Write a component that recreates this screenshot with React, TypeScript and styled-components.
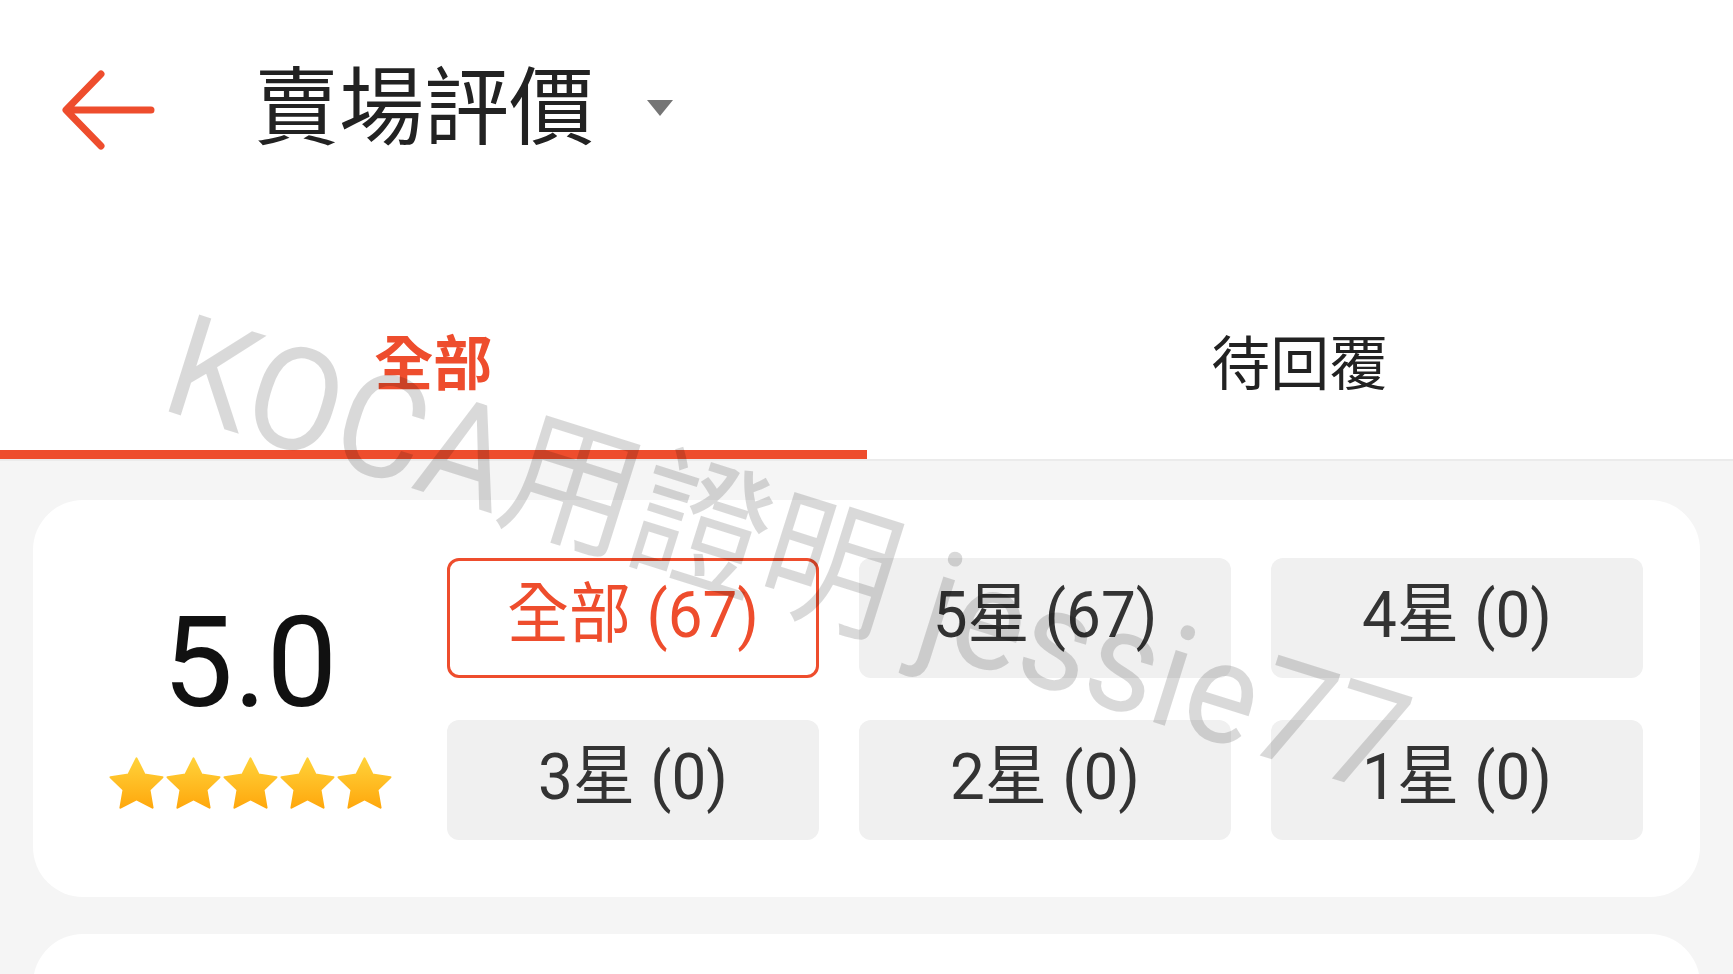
import React from "react";
import styled, { createGlobalStyle } from "styled-components";

const Global = createGlobalStyle`
  html, body { margin: 0; padding: 0; background: #fff; }
  body { font-family: Roboto, "Noto Sans CJK TC", sans-serif; }
  * { box-sizing: border-box; }
`;

const ORANGE = "#ee4d2d";

const Page = styled.div`
  position: relative;
  width: 100%;
  height: 974px;
  overflow: hidden;
  background: #f5f5f5;
`;

const Header = styled.header`
  height: 212px;
  background: #fff;
  display: flex;
  align-items: center;
  padding-left: 61px;
`;

const BackButton = styled.div`
  width: 94px;
  height: 84px;
  margin-top: 8px;
  display: flex;
  align-items: center;
`;

const Title = styled.h1`
  margin: 0 0 12px 99px;
  font-family: "Noto Sans CJK TC", sans-serif;
  font-weight: 400;
  font-size: 85px;
  line-height: 1;
  color: #222;
`;

const Caret = styled.div`
  margin-left: 53px;
  margin-top: 4px;
  width: 0;
  height: 0;
  border-left: 13px solid transparent;
  border-right: 13px solid transparent;
  border-top: 16px solid #757575;
`;

const Tabs = styled.nav`
  display: flex;
  background: #fff;
  border-bottom: 2px solid #ebebeb;
`;

const Tab = styled.div<{ $active?: boolean }>`
  flex: 1;
  text-align: center;
  padding-top: 124px;
  padding-bottom: 56px;
  font-size: 59px;
  line-height: 58px;
  font-weight: ${(p) => (p.$active ? 700 : 400)};
  color: ${(p) => (p.$active ? ORANGE : "#222")};
  border-bottom: 9px solid ${(p) => (p.$active ? ORANGE : "transparent")};
`;

const Content = styled.main`
  padding: 39px 33px 0;
  display: flex;
  flex-direction: column;
  gap: 37px;
`;

const Card = styled.section`
  flex-shrink: 0;
  height: 397px;
  background: #fff;
  border-radius: 50px;
  display: flex;
  align-items: center;
`;

const NextCard = styled.section`
  flex-shrink: 0;
  height: 200px;
  background: #fff;
  border-radius: 50px 50px 0 0;
`;

const RatingCol = styled.div`
  width: 414px;
  padding-left: 20px;
  padding-top: 13px;
  display: flex;
  flex-direction: column;
  align-items: center;
`;

const Score = styled.div`
  font-family: Roboto, sans-serif;
  font-size: 126px;
  line-height: 1;
  color: #111;
`;

const Stars = styled.div`
  display: flex;
  gap: 2px;
  margin-top: 31px;
`;

const Grid = styled.div`
  display: grid;
  grid-template-columns: repeat(3, 372px);
  grid-auto-rows: 120px;
  column-gap: 40px;
  row-gap: 42px;
`;

const FilterButton = styled.div<{ $active?: boolean }>`
  display: flex;
  align-items: center;
  justify-content: center;
  border-radius: 12px;
  font-size: 62px;
  line-height: 1;
  padding-bottom: 6px;
  background: ${(p) => (p.$active ? "#fff" : "#f0f0f0")};
  color: ${(p) => (p.$active ? ORANGE : "#333")};
  border: 3px solid ${(p) => (p.$active ? ORANGE : "transparent")};
`;

const Label = styled.span`
  display: inline-block;
  transform: scaleY(1.06);
`;

const Watermark = styled.div`
  position: absolute;
  left: 194px;
  top: 294px;
  transform-origin: left top;
  transform: rotate(17.5deg) scaleY(1.06);
  font-family: Roboto, "Noto Sans CJK TC", sans-serif;
  font-size: 135px;
  line-height: 1;
  white-space: nowrap;
  color: rgba(0, 0, 0, 0.15);
  pointer-events: none;
`;

const Star = () => (
  <svg width="55" height="53" viewBox="1.4 1 21.2 20.4">
    <defs>
      <linearGradient id="sg" x1="0" y1="0" x2="0" y2="1">
        <stop offset="0" stopColor="#ffd23a" />
        <stop offset="1" stopColor="#ffa80d" />
      </linearGradient>
    </defs>
    <path
      d="M12 1.5l3.09 6.26L22 8.77l-5 4.87 1.18 6.88L12 17.27l-6.18 3.25L7 13.64 2 8.77l6.91-1.01L12 1.5z"
      fill="url(#sg)"
      stroke="url(#sg)"
      strokeWidth="0.8"
      strokeLinejoin="round"
    />
  </svg>
);

const filters = [
  { label: "全部 (67)", active: true },
  { label: "5星 (67)" },
  { label: "4星 (0)" },
  { label: "3星 (0)" },
  { label: "2星 (0)" },
  { label: "1星 (0)" },
];

export default function App() {
  return (
    <Page>
      <Global />
      <Header>
        <BackButton>
          <svg width="94" height="84" viewBox="0 0 94 84" fill="none">
            <path
              d="M90 42H6M40 6L5 42l35 36"
              stroke={ORANGE}
              strokeWidth="7"
              strokeLinecap="round"
              strokeLinejoin="round"
            />
          </svg>
        </BackButton>
        <Title>賣場評價</Title>
        <Caret />
      </Header>
      <Tabs>
        <Tab $active>全部</Tab>
        <Tab>待回覆</Tab>
      </Tabs>
      <Content>
        <Card>
          <RatingCol>
            <Score>5.0</Score>
            <Stars>
              {[0, 1, 2, 3, 4].map((i) => (
                <Star key={i} />
              ))}
            </Stars>
          </RatingCol>
          <Grid>
            {filters.map((f) => (
              <FilterButton key={f.label} $active={f.active}>
                <Label>{f.label}</Label>
              </FilterButton>
            ))}
          </Grid>
        </Card>
        <NextCard />
      </Content>
      <Watermark>KOCA用證明 jessie77</Watermark>
    </Page>
  );
}
